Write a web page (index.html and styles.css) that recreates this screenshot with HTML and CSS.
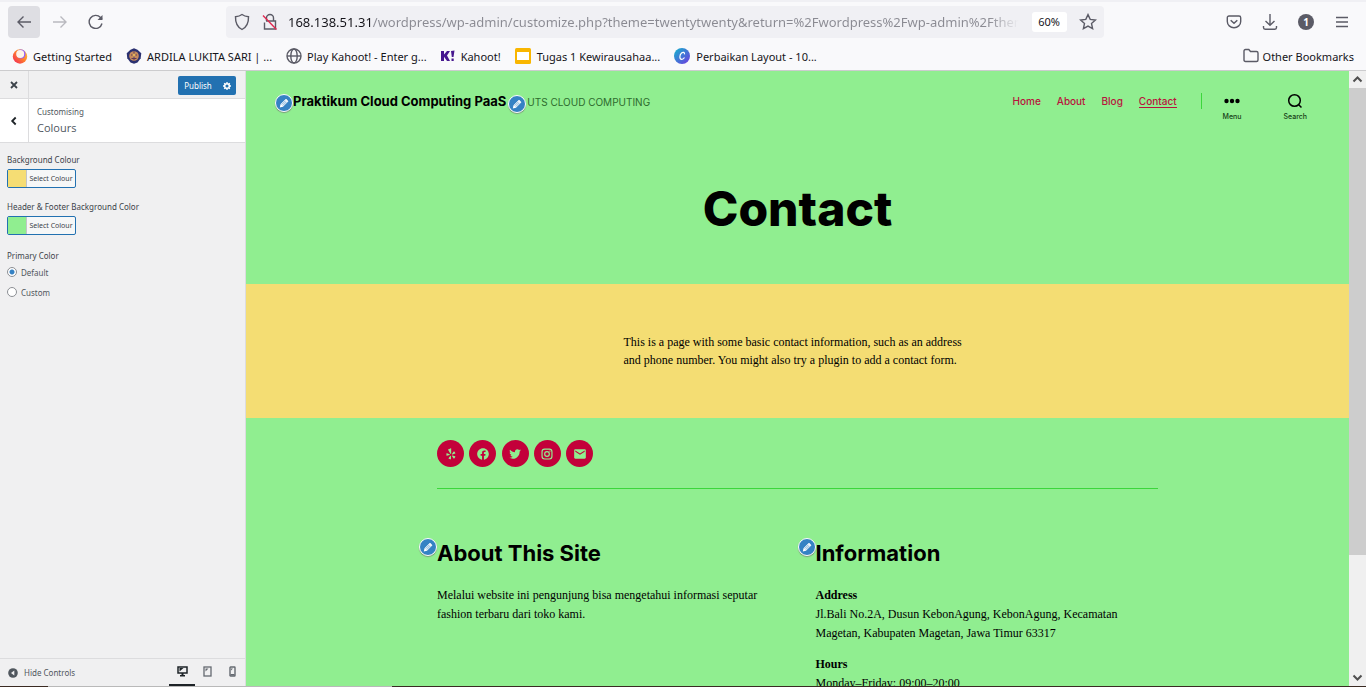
FILE: index.html
```
<!DOCTYPE html>
<html lang="en">
<head>
<meta charset="utf-8">
<meta name="viewport" content="width=device-width, initial-scale=1">
<title>Customise: Colours</title>
<link rel="stylesheet" href="styles.css">
</head>
<body>
<svg class="defs" aria-hidden="true">
  <symbol id="pencil" viewBox="0 0 20 20"><path fill="currentColor" d="M13.9 3.4l2.7 2.7c.8.8.5 1.3 0 1.9l-8.300 8.300L3 17.500l1.200-5.300 8.200-8.300c.5-.6 1-.9 1.500-.5z"/><path d="M6.200 12.700l6.500-6.500M8 14.300l6.400-6.400" stroke="#3582c4" stroke-width="1.100"/></symbol>
</svg>

<header class="browser">
  <div class="toolbar">
    <div class="nav-buttons">
      <button class="tool tool-active" type="button" aria-label="Back"><svg width="16" height="16" viewBox="0 0 16 16"><path d="M15 8H2M7.500 2.500L2 8l5.500 5.500"/></svg></button>
      <button class="tool tool-off" type="button" aria-label="Forward"><svg width="16" height="16" viewBox="0 0 16 16"><path d="M1 8h13M8.500 2.500L14 8l-5.500 5.500"/></svg></button>
      <button class="tool" type="button" aria-label="Reload"><svg width="16" height="16" viewBox="0 0 16 16"><path d="M14 9.500A6.500 6.500 0 1 1 12.500 3.500L14 5"/><path d="M14.500 1v5h-5z" fill="currentColor" stroke="none"/></svg></button>
    </div>
    <div class="address">
      <svg class="tone" width="16" height="18" viewBox="0 0 16 18"><path d="M8 1.500c2 1.500 4 2 6.500 2.200.2 6-1.700 10.300-6.500 12.800C3.200 14 1.300 9.700 1.500 3.700 4 3.500 6 3 8 1.500z"/></svg>
      <svg class="tone" width="16" height="18" viewBox="0 0 16 18"><path d="M4.500 8V5a3.500 3.500 0 0 1 7 0v3M4 8h9.500v8H2.500V9.500"/><path d="M1 2.500l13.500 14" stroke="#e22850"/></svg>
      <input class="url" type="text" aria-label="Address" value="168.138.51.31/wordpress/wp-admin/customize.php?theme=twentytwenty&amp;return=%2Fwordpress%2Fwp-admin%2Fthemes.php">
      <button class="zoom-level" type="button">60%</button>
      <button class="bare" type="button" aria-label="Bookmark this page"><svg width="18" height="18" viewBox="0 0 18 18"><path d="M9 1.600l2.200 4.800 5.200.6-3.900 3.500 1.100 5.200L9 13.100l-4.600 2.600 1.100-5.200L1.600 7l5.200-.6z"/></svg></button>
    </div>
    <div class="tools-right">
      <button class="bare" type="button" aria-label="Pocket"><svg width="16" height="16" viewBox="0 0 16 16"><path d="M3 2h10c1 0 1.700.7 1.700 1.700V7.500a6.700 6.200 0 0 1-13.400 0V3.700C1.300 2.700 2 2 3 2z"/><path d="M4.700 6.200L8 9.300l3.300-3.100" stroke-width="1.500"/></svg></button>
      <button class="bare" type="button" aria-label="Downloads"><svg width="16" height="16" viewBox="0 0 16 16"><path d="M8 0v11M3.500 7L8 11.300 12.500 7M1.500 12v1.500c0 1 .6 1.700 1.600 1.700h9.800c1 0 1.600-.7 1.600-1.700V12"/></svg></button>
      <button class="bare" type="button" aria-label="Account"><span class="account">1</span></button>
      <button class="bare" type="button" aria-label="Menu"><svg width="14" height="12" viewBox="0 0 14 12"><path d="M1 1.500h12M1 6h12M1 10.500h12"/></svg></button>
    </div>
  </div>
  <nav class="bookmarks">
    <a class="bm" href="#"><svg width="16" height="16" viewBox="0 0 16 16"><defs><linearGradient id="ff" x1="1" y1="0" x2="0" y2="1"><stop offset="0" stop-color="#ffd43a"/><stop offset=".5" stop-color="#ff7a2f"/><stop offset="1" stop-color="#f0205f"/></linearGradient></defs><circle cx="8" cy="8.500" r="7.200" fill="url(#ff)"/><circle cx="9" cy="6" r="4.500" fill="#9059ff"/><circle cx="8.200" cy="6" r="4" fill="#fff4e6"/></svg>Getting Started</a>
    <a class="bm" href="#"><svg width="16" height="16" viewBox="0 0 16 16"><path d="M8 .3l3.500 1.500 3.800 3.500-.6 5-3.200 4.200L8 15.700l-3.500-1.200-3.200-4.200-.6-5 3.800-3.500z" fill="#2b3170"/><circle cx="8" cy="8" r="4.800" fill="#c58a5c"/><path d="M8 3.500V12M5 7h6M5.500 10.500h5" stroke="#5a3a5e" stroke-width="1"/><circle cx="8" cy="7" r="1.500" fill="#e5b45a"/></svg>ARDILA LUKITA SARI | ...</a>
    <a class="bm" href="#"><svg class="tone" width="16" height="16" viewBox="0 0 16 16"><circle cx="8" cy="8" r="7"/><ellipse cx="8" cy="8" rx="3.200" ry="7"/><path d="M1 8h14"/></svg>Play Kahoot! - Enter g...</a>
    <a class="bm bm-wide" href="#"><svg width="14" height="14" viewBox="0 0 14 14"><path d="M0 2h3v3.500L6 2h3L6 6.500 9 12H6L3 7.800V12H0zM10 2l3.500-.5-1 6.500h-1.700zM10.500 9.500h2.200V12h-2.200z" fill="#46178f"/></svg>Kahoot!</a>
    <a class="bm bm-wide" href="#"><svg width="16" height="16" viewBox="0 0 16 16"><rect width="16" height="16" rx="1.500" fill="#f9b600"/><rect x="2" y="4" width="12" height="8" fill="#fff"/></svg>Tugas 1 Kewirausahaa...</a>
    <a class="bm bm-wide" href="#"><svg width="16" height="16" viewBox="0 0 16 16"><defs><linearGradient id="cv" x1="0" y1="0" x2="1" y2="1"><stop offset="0" stop-color="#12b5cb"/><stop offset="1" stop-color="#7038e0"/></linearGradient></defs><circle cx="8" cy="8" r="8" fill="url(#cv)"/><path d="M10.500 6.300c.4-2-1.500-2.600-3-1.300-2.200 2-2.200 6.300.2 6.300 1.200 0 2.200-.8 2.800-1.800" fill="none" stroke="#fff" stroke-width="1.200"/></svg>Perbaikan Layout - 10...</a>
    <a class="bm bm-last" href="#"><svg class="tone" width="16" height="16" viewBox="0 0 16 16"><path d="M1 3c0-1 .5-1.500 1.500-1.500h3.300L7.500 3.500h6c1 0 1.500.5 1.500 1.500v7c0 1-.5 1.500-1.500 1.500h-11C1.500 13.500 1 13 1 12z"/></svg>Other Bookmarks</a>
  </nav>
</header>

<div class="workspace">
  <aside class="sidebar">
    <div class="side-top">
      <button class="side-icon" type="button" aria-label="Close"><svg width="8" height="8" viewBox="0 0 8 8"><path d="M1 1l6 6M7 1L1 7" stroke="#3c434a" stroke-width="1.800"/></svg></button>
      <div class="publish">
        <button class="publish-main" type="button">Publish</button>
        <button class="publish-gear" type="button" aria-label="Publish settings"><svg width="8" height="8" viewBox="0 0 8 8"><circle cx="4" cy="4" r="2.300" fill="none" stroke="#fff" stroke-width="1.500"/><path d="M4 0v1.500M4 6.500V8M0 4h1.500M6.500 4H8M1.200 1.200l1 1M5.800 5.800l1 1M6.800 1.200l-1 1M2.200 5.800l-1 1" stroke="#fff" stroke-width="1.300"/></svg></button>
      </div>
    </div>
    <div class="side-title">
      <button class="side-icon side-back" type="button" aria-label="Back"><svg width="8" height="10" viewBox="0 0 8 10"><path d="M5.700 1.500L2.200 5l3.500 3.500" fill="none" stroke="#1d2327" stroke-width="1.800"/></svg></button>
      <div class="side-heading">
        <span class="crumb">Customising</span>
        <h1 class="panel-name">Colours</h1>
      </div>
    </div>
    <div class="controls">
      <div class="control">
        <span class="label" id="bg-label">Background Colour</span>
        <button class="picker" type="button" aria-describedby="bg-label"><span class="swatch swatch-sand"></span><span class="picker-text">Select Colour</span></button>
      </div>
      <div class="control">
        <span class="label" id="hf-label">Header &amp; Footer Background Color</span>
        <button class="picker" type="button" aria-describedby="hf-label"><span class="swatch swatch-green"></span><span class="picker-text">Select Colour</span></button>
      </div>
      <fieldset class="control radios">
        <legend class="label">Primary Color</legend>
        <label class="radio"><input type="radio" name="primary" checked>Default</label>
        <label class="radio"><input type="radio" name="primary">Custom</label>
      </fieldset>
    </div>
    <div class="side-foot">
      <button class="hide" type="button"><svg width="10" height="10" viewBox="0 0 10 10"><circle cx="5" cy="5" r="4.800" fill="#50575e"/><path d="M6.300 2.600v4.800L3 5z" fill="#f0f0f1"/></svg>Hide Controls</button>
      <div class="devices">
        <button class="device device-on" type="button" aria-label="Desktop"><svg width="11" height="11" viewBox="0 0 11 11"><rect x="1" y="1" width="9" height="6" fill="none" stroke="currentColor" stroke-width="1.500"/><path d="M2.500 5.500L6.500 2h-4zM4.500 7h2v2H8v1.500H3V9h1.500z" fill="currentColor"/></svg></button>
        <button class="device" type="button" aria-label="Tablet"><svg width="9" height="11" viewBox="0 0 9 11"><rect x="1" y="1" width="7" height="9" fill="none" stroke="currentColor" stroke-width="1.300"/><path d="M2.500 5.500V2.500h3z" fill="currentColor"/></svg></button>
        <button class="device" type="button" aria-label="Mobile"><svg width="7" height="11" viewBox="0 0 7 11"><rect x="1" y="1" width="5" height="9" rx=".5" fill="none" stroke="currentColor" stroke-width="1.400"/><path d="M2 4.500V2.500h2zM1.500 8h4v1.500h-4z" fill="currentColor"/></svg></button>
      </div>
    </div>
  </aside>

  <main class="preview">
    <header class="site-header">
      <div class="brand">
        <a class="site-name" href="#">Praktikum Cloud Computing PaaS</a>
        <button class="edit edit-name" type="button" aria-label="Edit site title"><svg><use href="#pencil"/></svg></button>
      </div>
      <div class="brand tagline">
        <span>UTS CLOUD COMPUTING</span>
        <button class="edit edit-tag" type="button" aria-label="Edit tagline"><svg><use href="#pencil"/></svg></button>
      </div>
      <nav class="site-nav">
        <a href="#">Home</a>
        <a href="#">About</a>
        <a href="#">Blog</a>
        <a class="current" href="#">Contact</a>
      </nav>
      <div class="toggles">
        <button class="toggle" type="button"><svg width="16" height="16" viewBox="0 0 16 16"><circle cx="2.500" cy="8" r="2.200"/><circle cx="8" cy="8" r="2.200"/><circle cx="13.500" cy="8" r="2.200"/></svg>Menu</button>
        <button class="toggle" type="button"><svg width="16" height="16" viewBox="0 0 16 16"><circle cx="7.500" cy="7.500" r="5.800" fill="none" stroke="#000" stroke-width="1.500"/><path d="M11.500 11.500l3 3" stroke="#000" stroke-width="1.500"/></svg>Search</button>
      </div>
    </header>
    <h2 class="page-title">Contact</h2>
    <section class="content">
      <p>This is a page with some basic contact information, such as an address<br>and phone number. You might also try a plugin to add a contact form.</p>
    </section>
    <footer class="site-footer">
      <div class="social">
        <a href="#" aria-label="Yelp"><svg viewBox="0 0 24 24"><path d="M12.300 2.700v8.400c0 .8-.9 1-1.300.4L7.200 5.200c-.3-.6-.2-1 .4-1.300l3.500-1.500c.6-.2 1.200 0 1.200.3zM5.200 10.600l4.300 1.800c.8.3.8 1.300 0 1.500L5 15.100c-.6.100-.9-.2-.9-.8l.1-3c0-.6.400-.9 1-.7zM11.900 15.800v4.700c0 .6-.4.900-1 .7l-2.600-1c-.6-.3-.7-.7-.3-1.200l2.700-3.500c.5-.6 1.200-.4 1.200.3zM14.600 14.700l4.300 1.300c.6.200.8.600.4 1.200l-1.600 2.400c-.4.400-.8.400-1.200-.1l-2.600-3.700c-.4-.7 0-1.300.7-1.100zM13.900 11.500l2.700-3.600c.4-.5.800-.5 1.200 0l1.600 2.300c.3.500.2.900-.4 1.100l-4.300 1.400c-.8.200-1.300-.6-.8-1.200z"/></svg></a>
        <a href="#" aria-label="Facebook"><svg viewBox="0 0 24 24"><path d="M12 2C6.500 2 2 6.500 2 12c0 5 3.700 9.100 8.400 9.900v-7H7.900V12h2.500V9.800c0-2.500 1.500-3.900 3.800-3.900 1.100 0 2.200.2 2.200.2v2.500h-1.300c-1.200 0-1.600.8-1.600 1.600V12h2.800l-.4 2.900h-2.300v7C18.300 21.100 22 17 22 12c0-5.500-4.500-10-10-10z"/></svg></a>
        <a href="#" aria-label="Twitter"><svg viewBox="0 0 24 24"><path d="M22.200 5.700c-.8.300-1.500.6-2.400.7.900-.5 1.500-1.300 1.800-2.300-.8.500-1.700.8-2.600 1-.8-.8-1.800-1.300-3-1.300-2.300 0-4.100 1.800-4.100 4.100 0 .3 0 .6.100.9-3.400-.2-6.400-1.800-8.500-4.300-.4.600-.6 1.300-.6 2.100 0 1.400.7 2.700 1.800 3.400-.7 0-1.300-.2-1.900-.5 0 2 1.400 3.700 3.300 4.100-.6.200-1.200.2-1.900.1.500 1.600 2 2.800 3.800 2.800-1.700 1.300-3.900 2-6.100 1.700 1.800 1.200 4 1.900 6.300 1.900 7.500 0 11.700-6.300 11.700-11.700v-.6c.9-.5 1.600-1.300 2.300-2.100z"/></svg></a>
        <a href="#" aria-label="Instagram"><svg viewBox="0 0 24 24"><rect x="3.500" y="3.500" width="17" height="17" rx="4.500" fill="none" stroke="currentColor" stroke-width="2"/><circle cx="12" cy="12" r="4" fill="none" stroke="currentColor" stroke-width="2"/><circle cx="17" cy="7" r="1.200"/></svg></a>
        <a href="#" aria-label="Email"><svg viewBox="0 0 24 24"><path d="M20 4H4c-1.100 0-2 .9-2 2v12c0 1.100.9 2 2 2h16c1.100 0 2-.9 2-2V6c0-1.100-.9-2-2-2zm0 4.200l-8 5-8-5V6l8 5 8-5z"/></svg></a>
      </div>
      <div class="widgets">
        <section class="widget">
          <button class="edit edit-widget" type="button" aria-label="Edit widget"><svg><use href="#pencil"/></svg></button>
          <h3>About This Site</h3>
          <p>Melalui website ini pengunjung bisa mengetahui informasi seputar<br>fashion terbaru dari toko kami.</p>
        </section>
        <section class="widget">
          <button class="edit edit-widget" type="button" aria-label="Edit widget"><svg><use href="#pencil"/></svg></button>
          <h3>Information</h3>
          <p><strong>Address</strong><br>Jl.Bali No.2A, Dusun KebonAgung, KebonAgung, Kecamatan<br>Magetan, Kabupaten Magetan, Jawa Timur 63317</p>
          <p><strong>Hours</strong><br>Monday–Friday: 09:00–20:00</p>
        </section>
      </div>
    </footer>
  </main>

  <div class="scroll">
    <svg width="17" height="17" viewBox="0 0 17 17"><path d="M4.500 10.500l4-4 4 4"/></svg>
    <div class="thumb"></div>
    <svg class="scroll-down" width="17" height="17" viewBox="0 0 17 17"><path d="M4.500 6.500l4 4 4-4"/></svg>
  </div>
</div>
<div class="edge"><span class="edge-lit"></span></div>
</body>
</html>
```

FILE: styles.css
```
* { box-sizing: border-box; }
body {
  margin: 0;
  height: 100vh;
  display: flex;
  flex-direction: column;
  overflow: hidden;
  background: #f9f9fb;
  font-family: "Noto Sans", "Open Sans", sans-serif;
  color: #15141a;
}
button { margin: 0; padding: 0; border: 0; background: none; font: inherit; color: inherit; }
a { color: inherit; text-decoration: none; }
svg { display: block; flex: none; }
.defs { position: absolute; width: 0; height: 0; }

/* Browser chrome */
.browser { flex: none; border-top: 2px solid #f0f0f4; border-bottom: 1px solid #ccccce; }
.toolbar { display: flex; align-items: center; height: 40px; padding: 0 16px 0 8px; }
.nav-buttons { display: flex; gap: 4px; width: 218px; }
.tool, .bare { display: grid; place-items: center; color: #5b5b66; }
.tool { width: 32px; height: 32px; border-radius: 4px; }
.tool svg, .bare svg, .tone { fill: none; stroke: #5b5b66; stroke-width: 1.4; }
.tool-active { background: #dedee3; }
.tool-off { opacity: .4; }
.address { flex: none; width: 65.4%; height: 32px; display: flex; align-items: center; gap: 12px; padding: 0 7px 0 8px; border-radius: 4px; background: #f0f0f4; }
.url {
  flex: 1;
  min-width: 0;
  height: 24px;
  margin-left: -2px;
  margin-right: -6px;
  padding: 0;
  border: 0;
  outline: 0;
  font: 13px "Noto Sans", sans-serif;
  color: transparent;
  background: linear-gradient(90deg, #15141a 0 85px, #8a8a92 85px 95%, transparent 99%);
  -webkit-background-clip: text;
  background-clip: text;
}
.zoom-level { width: 35px; height: 20px; border-radius: 3px; background: #fff; font-size: 11px; line-height: 20px; }
.tools-right { margin-left: auto; display: flex; align-items: center; gap: 20px; }
.tools-right .bare { min-width: 16px; }
.account { width: 16px; height: 16px; border-radius: 50%; background: #5b5b66; color: #fff; font: bold 10px/16px "Noto Sans", sans-serif; text-align: center; }
.bookmarks { display: flex; align-items: center; height: 28px; padding: 0 12px; font-size: 11px; }
.bm { display: flex; align-items: center; gap: 5px; margin-right: 14px; white-space: nowrap; }
.bm-wide { gap: 6px; }
.bm-last { gap: 4px; margin: 0 0 0 auto; }

/* Customiser sidebar */
.workspace { flex: 1; min-height: 0; display: flex; }
.sidebar { flex: none; width: 246px; display: flex; flex-direction: column; border-right: 1px solid #dcdcde; background: #f0f0f1; color: #50575e; font-size: 8px; }
.side-top { display: flex; height: 28px; border-bottom: 1px solid #dcdcde; padding-right: 9px; align-items: center; }
.side-icon { width: 29px; align-self: stretch; display: grid; place-items: center; border-right: 1px solid #dcdcde; }
.publish { margin-left: auto; display: flex; margin-top: 2px; height: 19px; border-radius: 2px; overflow: hidden; background: #2271b1; color: #fff; }
.publish-main { width: 40px; line-height: 19px; font-size: 8px; }
.publish-gear { width: 18px; display: grid; place-items: center; }
.side-title { display: flex; height: 44px; background: #fff; border-bottom: 1px solid #dcdcde; }
.side-heading { padding: 7px 8px; }
.crumb { display: block; font-size: 8px; line-height: 12px; }
.panel-name { margin: 0; font-size: 11px; line-height: 20px; font-weight: 400; font-family: "Open Sans", sans-serif; }
.controls { flex: 1; padding: 11px 7px; }
.control { margin-bottom: 13px; }
.label { display: block; padding: 0; font-size: 8px; line-height: 12px; color: #3c434a; }
.picker { display: flex; width: 69px; height: 19px; margin-top: 3px; border: 1px solid #2271b1; border-radius: 2px; background: #f6f7f7; }
.swatch { width: 19px; align-self: stretch; border-right: 1px solid #c3c4c7; }
.swatch-sand { background: #f5dd74; }
.swatch-green { background: #90ee90; }
.picker-text { flex: 1; font-size: 7px; line-height: 17px; text-align: center; color: #3c434a; white-space: nowrap; }
.radios { margin: 15px 0 0; padding: 0; border: 0; }
.radio { display: flex; align-items: center; gap: 4px; height: 20px; font-size: 8px; }
.radio input { appearance: none; width: 10px; height: 10px; margin: 0; border: 1px solid #8c8f94; border-radius: 50%; background: #fff; }
.radio input:checked { background: radial-gradient(circle, #3582c4 0 2px, #fff 3px); }
.side-foot { display: flex; height: 28px; border-top: 1px solid #dcdcde; padding-left: 8px; }
.hide { display: flex; align-items: center; gap: 6px; font-size: 8px; color: #50575e; }
.devices { margin-left: auto; display: flex; }
.device { width: 25px; display: grid; place-items: center; color: #646970; border-bottom: 2px solid transparent; }
.device-on { width: 26px; color: #1d2327; border-bottom-color: #1d2327; }

/* Site preview */
.preview { flex: 1; min-width: 0; overflow: hidden; background: #90ee90; color: #000; font-family: Inter, sans-serif; }
.site-header { display: flex; padding: 22px 42px 0 47px; height: 96px; font-size: 10px; line-height: 16px; }
.brand { position: relative; white-space: nowrap; }
.site-name { font-size: 13px; font-weight: 700; }
.tagline { margin-left: 21px; color: #2e6b2e; line-height: 18px; }
.edit { position: absolute; width: 18px; height: 18px; display: grid; place-items: center; border: 1px solid #fff; border-radius: 50%; background: #3582c4; color: #fff; box-shadow: 0 1px 1px #7a9a7a; }
.edit svg { width: 12px; height: 12px; }
.edit-name { left: -18px; top: 1px; }
.edit-tag { left: -19px; top: 2px; }
.edit-widget { left: -18px; top: -1px; }
.site-nav { margin-left: auto; display: flex; gap: 16px; padding-right: 24px; font-weight: 500; }
.site-nav a { height: 15px; color: #b9133d; }
.site-nav .current { border-bottom: 1px solid #b9133d; }
.toggles { display: flex; gap: 42px; }
.toggles::before { content: ""; width: 1px; height: 16px; margin-right: -21px; background: #3cd63c; }
.toggle { display: flex; flex-direction: column; align-items: center; height: 32px; font-size: 7px; line-height: 15px; font-weight: 500; color: #154015; }
.page-title { margin: 0; height: 117px; font-size: 48px; line-height: 84px; font-weight: 800; text-align: center; }
.content { padding: 49px 0; background: #f4dd73; font-family: "Liberation Serif", serif; font-size: 12px; line-height: 18px; }
.content p { width: 348px; margin: 0 auto; white-space: nowrap; }
.site-footer { width: 721px; max-width: 100%; margin: 0 auto; padding-top: 22px; }
.social { display: flex; justify-content: space-between; width: 156px; }
.social a { width: 27px; height: 27px; display: grid; place-items: center; border-radius: 50%; background: #c3003a; color: #90ee90; }
.social svg { width: 14px; height: 14px; fill: currentColor; }
.widgets { display: grid; grid-template-columns: 1fr 1fr; gap: 36px; margin-top: 21px; padding-top: 50px; border-top: 1px solid #3cd63c; }
.widget { position: relative; font-family: "Liberation Serif", serif; font-size: 12px; line-height: 19px; }
.widget h3 { margin: 0 0 19px; font: 700 22px/28px Inter, sans-serif; white-space: nowrap; }
.widget p { margin: 0 0 12px; white-space: nowrap; }

.scroll { flex: none; width: 17px; display: flex; flex-direction: column; background: #f0f0f0; }
.scroll svg { fill: none; stroke: #505050; stroke-width: 2; }
.thumb { height: 76%; background: #cdcdcd; }
.scroll-down { margin-top: auto; }
.edge { flex: none; height: 1px; display: flex; background: #3a2a22; padding-left: 48px; }
.edge-lit { width: 344px; background: #b9b9b9; }
```
